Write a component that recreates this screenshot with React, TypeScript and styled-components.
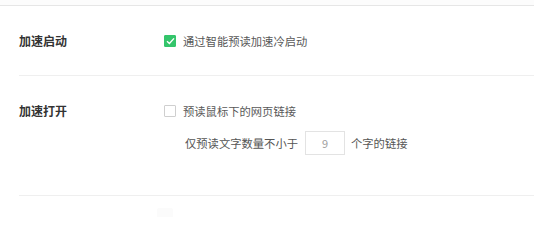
import React from "react";
import styled, { createGlobalStyle } from "styled-components";

const Global = createGlobalStyle`
  html, body { margin: 0; padding: 0; background: #ffffff; }
  body { font-family: "Noto Sans CJK SC", "Noto Sans", sans-serif; }
`;

const Page = styled.div`
  width: 534px;
  height: 217px;
  overflow: hidden;
  background: #ffffff;
`;

const TopBar = styled.div`
  height: 5px;
  background: #fcfcfc;
  border-bottom: 1px solid #e6e6e6;
`;

const Row = styled.div<{ $pt: number; $pb: number }>`
  display: flex;
  margin-left: 19px;
  padding-top: ${(p) => p.$pt}px;
  padding-bottom: ${(p) => p.$pb}px;
  border-bottom: 1px solid #efefef;
`;

const Label = styled.div`
  width: 145px;
  flex: none;
  font-size: 12px;
  line-height: 20px;
  font-weight: 700;
  color: #333333;
`;

const Options = styled.div`
  display: flex;
  flex-direction: column;
  gap: 10px;
`;

const Check = styled.label`
  display: flex;
  align-items: center;
  gap: 7px;
  height: 20px;
  font-size: 11.3px;
  color: #585858;
`;

const Box = styled.span<{ $on?: boolean }>`
  width: 12px;
  height: 12px;
  border-radius: 1px;
  box-sizing: border-box;
  display: flex;
  align-items: center;
  justify-content: center;
  background: ${(p) => (p.$on ? "#34c56b" : "#ffffff")};
  border: 1px solid ${(p) => (p.$on ? "#34c56b" : "#cfcfcf")};
`;

const SubLine = styled.div`
  display: flex;
  align-items: center;
  padding-left: 21px;
  height: 24px;
  font-size: 11.3px;
  color: #555555;
`;

const NumBox = styled.div`
  width: 40px;
  height: 24px;
  box-sizing: border-box;
  margin: 0 6px 0 7px;
  border: 1px solid #e3e3e3;
  display: flex;
  align-items: center;
  justify-content: center;
  color: #a0a0a0;
  font-size: 11px;
`;

const Faint = styled.div`
  margin-left: 157px;
  margin-top: 12px;
  width: 16px;
  height: 12px;
  background: #fbfbfb;
  border-radius: 2px;
`;

export default function App() {
  return (
    <Page>
      <Global />
      <TopBar />
      <Row $pt={25} $pb={24}>
        <Label>加速启动</Label>
        <Options>
          <Check>
            <Box $on>
              <svg width="9" height="8" viewBox="0 0 9 8">
                <path d="M1 4.2 L3.4 6.4 L8 1.4" fill="none" stroke="#fff" strokeWidth="1.4" />
              </svg>
            </Box>
            通过智能预读加速冷启动
          </Check>
        </Options>
      </Row>
      <Row $pt={25} $pb={40}>
        <Label>加速打开</Label>
        <Options>
          <Check>
            <Box />
            预读鼠标下的网页链接
          </Check>
          <SubLine>
            仅预读文字数量不小于
            <NumBox>9</NumBox>
            个字的链接
          </SubLine>
        </Options>
      </Row>
      <Faint />
    </Page>
  );
}
